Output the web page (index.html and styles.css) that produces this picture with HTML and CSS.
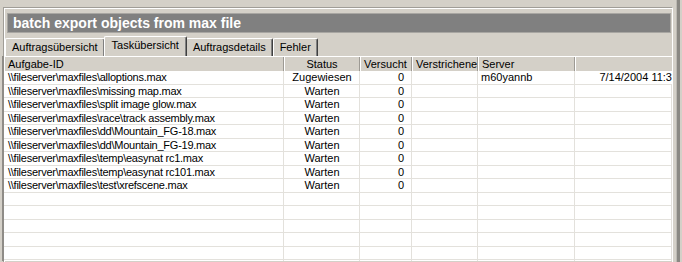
FILE: index.html
```html
<!DOCTYPE HTML>
<html>
    <head>
        <title>Taskübersicht</title>
        <link rel="stylesheet" href="styles.css">
    </head>
    <body>
        <div class="window">
            <div class="main">
                <div class="group">
                    <div class="title">batch export objects from max file</div>

                    <div class="tabs">
                        <div class="tab">Auftragsübersicht</div>
                        <div class="tab active">Taskübersicht</div>
                        <div class="tab">Auftragsdetails</div>
                        <div class="tab">Fehler</div>
                    </div>

                    <div class="list">
                        <div class="row head">
                            <div class="cell">Aufgabe-ID</div>
                            <div class="cell center">Status</div>
                            <div class="cell">Versucht</div>
                            <div class="cell">Verstrichene</div>
                            <div class="cell">Server</div>
                            <div class="cell"></div>
                        </div>
                        <div class="row">
                            <div class="cell path">\\fileserver\maxfiles\alloptions.max</div>
                            <div class="cell center">Zugewiesen</div>
                            <div class="cell num">0</div>
                            <div class="cell"></div>
                            <div class="cell server">m60yannb</div>
                            <div class="cell date">7/14/2004 11:3</div>
                        </div>
                        <div class="row">
                            <div class="cell path">\\fileserver\maxfiles\missing map.max</div>
                            <div class="cell center">Warten</div>
                            <div class="cell num">0</div>
                            <div class="cell"></div>
                            <div class="cell"></div>
                            <div class="cell"></div>
                        </div>
                        <div class="row">
                            <div class="cell path">\\fileserver\maxfiles\split image glow.max</div>
                            <div class="cell center">Warten</div>
                            <div class="cell num">0</div>
                            <div class="cell"></div>
                            <div class="cell"></div>
                            <div class="cell"></div>
                        </div>
                        <div class="row">
                            <div class="cell path">\\fileserver\maxfiles\race\track assembly.max</div>
                            <div class="cell center">Warten</div>
                            <div class="cell num">0</div>
                            <div class="cell"></div>
                            <div class="cell"></div>
                            <div class="cell"></div>
                        </div>
                        <div class="row">
                            <div class="cell path">\\fileserver\maxfiles\dd\Mountain_FG-18.max</div>
                            <div class="cell center">Warten</div>
                            <div class="cell num">0</div>
                            <div class="cell"></div>
                            <div class="cell"></div>
                            <div class="cell"></div>
                        </div>
                        <div class="row">
                            <div class="cell path">\\fileserver\maxfiles\dd\Mountain_FG-19.max</div>
                            <div class="cell center">Warten</div>
                            <div class="cell num">0</div>
                            <div class="cell"></div>
                            <div class="cell"></div>
                            <div class="cell"></div>
                        </div>
                        <div class="row">
                            <div class="cell path">\\fileserver\maxfiles\temp\easynat rc1.max</div>
                            <div class="cell center">Warten</div>
                            <div class="cell num">0</div>
                            <div class="cell"></div>
                            <div class="cell"></div>
                            <div class="cell"></div>
                        </div>
                        <div class="row">
                            <div class="cell path">\\fileserver\maxfiles\temp\easynat rc101.max</div>
                            <div class="cell center">Warten</div>
                            <div class="cell num">0</div>
                            <div class="cell"></div>
                            <div class="cell"></div>
                            <div class="cell"></div>
                        </div>
                        <div class="row">
                            <div class="cell path">\\fileserver\maxfiles\test\xrefscene.max</div>
                            <div class="cell center">Warten</div>
                            <div class="cell num">0</div>
                            <div class="cell"></div>
                            <div class="cell"></div>
                            <div class="cell"></div>
                        </div>
                        <div class="row"><div class="cell"></div><div class="cell"></div><div class="cell"></div><div class="cell"></div><div class="cell"></div><div class="cell"></div></div>
                        <div class="row"><div class="cell"></div><div class="cell"></div><div class="cell"></div><div class="cell"></div><div class="cell"></div><div class="cell"></div></div>
                        <div class="row"><div class="cell"></div><div class="cell"></div><div class="cell"></div><div class="cell"></div><div class="cell"></div><div class="cell"></div></div>
                        <div class="row"><div class="cell"></div><div class="cell"></div><div class="cell"></div><div class="cell"></div><div class="cell"></div><div class="cell"></div></div>
                        <div class="row"><div class="cell"></div><div class="cell"></div><div class="cell"></div><div class="cell"></div><div class="cell"></div><div class="cell"></div></div>
                        <div class="row"><div class="cell"></div><div class="cell"></div><div class="cell"></div><div class="cell"></div><div class="cell"></div><div class="cell"></div></div>
                    </div>
                </div>
            </div>
            <div class="edge"></div>
        </div>
    </body>
</html>
```

FILE: styles.css
```css
body {
    margin: 0;
    width: 682px;
    height: 262px;
    overflow: hidden;
    background-color: #d4d0c8;
    font-family: "Liberation Sans", Arial, sans-serif;
    font-size: 11px;
    color: #000;
}
.window {
    display: flex;
    height: 262px;
}
.main {
    width: 676px;
    padding-top: 7px;
}
.edge {
    width: 3px;
    background-color: #8a8883;
    border-left: 1px solid #bcb9b3;
}
.group {
    margin-left: 3px;
    width: 668px;
    height: 255px;
    border-top: 1px solid #a09d97;
    border-left: 1px solid #a09d97;
    border-right: 1px solid #ffffff;
    box-shadow: inset 1px 1px 0 #ffffff;
}
.title {
    margin: 5px 1px 0 3px;
    height: 18px;
    line-height: 18px;
    padding-left: 5px;
    background-color: #808080;
    border: 1px solid #a8a6a2;
    color: #ffffff;
    font-weight: bold;
    font-size: 14px;
}
.tabs {
    display: flex;
    align-items: flex-end;
    height: 23px;
    padding-left: 1px;
}
.tab {
    height: 17px;
    line-height: 17px;
    padding: 0 6px;
    background-color: #d4d0c8;
    border-top: 1px solid #ffffff;
    border-left: 1px solid #ffffff;
    border-right: 1px solid #404040;
    border-radius: 2px 2px 0 0;
    box-shadow: inset -1px 0 0 #808080;
}
.tab.active {
    height: 19px;
    line-height: 17px;
    padding: 0 7px;
    margin: 0 -1px;
    position: relative;
}
.list {
    margin-left: -2px;
    width: 668px;
    height: 205px;
    overflow: hidden;
    background-color: #ffffff;
    border-left: 2px solid #8f8c87;
}
.row {
    display: grid;
    grid-template-columns: 280px 76px 52px 66px 97px 97px;
    height: 13.5px;
    box-sizing: border-box;
    border-bottom: 1px solid #e3e1dc;
}
.cell {
    height: 100%;
    line-height: 12px;
    padding: 0 3px 0 4px;
    border-right: 1px solid #e3e1dc;
    white-space: nowrap;
    overflow: hidden;
    box-sizing: border-box;
}
.row.head {
    height: 15px;
    background-color: #d4d0c8;
    border-top: 1px solid #ffffff;
    border-bottom: none;
}
.row.head .cell {
    line-height: 14px;
    border-right: 1px solid #9d9a94;
    box-shadow: inset 1px 0 0 #ffffff;
}
.row.head .cell:last-child {
    border-right: none;
}
.path {
    letter-spacing: -0.25px;
}
.center {
    text-align: center;
}
.num {
    text-align: right;
    padding-right: 7px;
}
.server {
    padding-left: 3px;
}
.date {
    text-align: right;
    padding: 0;
    border-right: none;
}
```
